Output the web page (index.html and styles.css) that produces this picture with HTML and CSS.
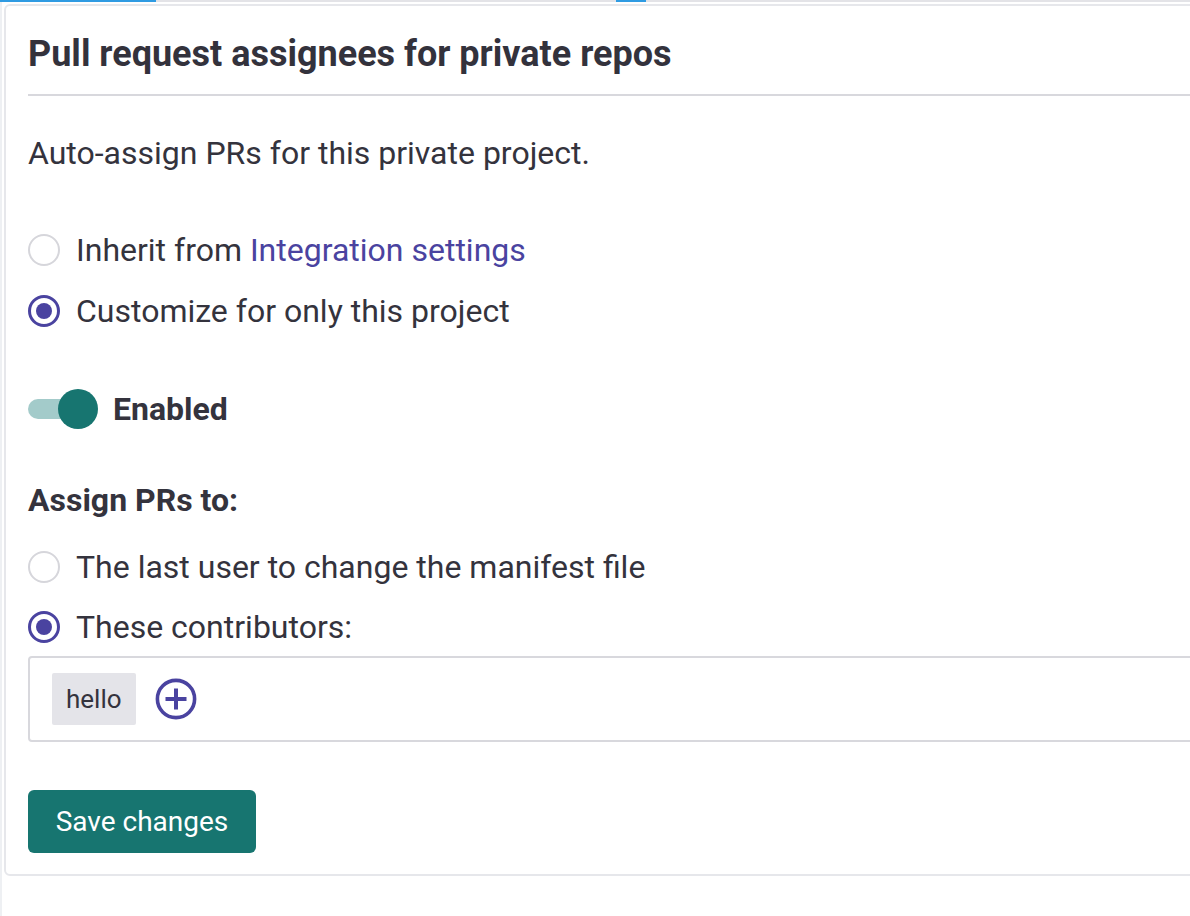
FILE: index.html
```html
<!DOCTYPE html>
<html lang="en">
<head>
<meta charset="utf-8">
<title>Pull request assignees</title>
<link rel="stylesheet" href="styles.css">
</head>
<body>
<div class="page">
  <div class="tabbar">
    <span class="tab-ind tab-ind-a"></span>
    <span class="tab-gap tab-gap-a"></span>
    <span class="tab-ind tab-ind-b"></span>
  </div>
  <div class="frame">
    <section class="card">
      <h2 class="card-title">Pull request assignees for private repos</h2>
      <p class="desc">Auto-assign PRs for this private project.</p>

      <div class="radio-group group-top">
        <label class="radio-row">
          <span class="radio"></span>
          <span class="radio-label">Inherit from <a class="link" href="#">Integration settings</a></span>
        </label>
        <label class="radio-row">
          <span class="radio radio-on"></span>
          <span class="radio-label">Customize for only this project</span>
        </label>
      </div>

      <div class="toggle-row">
        <span class="toggle"><span class="toggle-knob"></span></span>
        <span class="toggle-label">Enabled</span>
      </div>

      <h3 class="sub-title">Assign PRs to:</h3>

      <div class="radio-group group-assign">
        <label class="radio-row">
          <span class="radio"></span>
          <span class="radio-label">The last user to change the manifest file</span>
        </label>
        <label class="radio-row">
          <span class="radio radio-on"></span>
          <span class="radio-label">These contributors:</span>
        </label>
      </div>

      <div class="contrib-box">
        <span class="tag">hello</span>
        <span class="add-btn">
          <svg width="42" height="42" viewBox="0 0 42 42" aria-hidden="true">
            <circle cx="21" cy="21" r="18.6" fill="none" stroke="#4a43a0" stroke-width="3.6"/>
            <path d="M21 10.5 V31.5 M10.5 21 H31.5" stroke="#4a43a0" stroke-width="4" fill="none"/>
          </svg>
        </span>
      </div>

      <button class="save-btn" type="button">Save changes</button>
    </section>
  </div>
</div>
</body>
</html>
```

FILE: styles.css
```css
* { box-sizing: border-box; }

html, body {
  margin: 0;
  padding: 0;
  background: #ffffff;
  overflow: hidden;
}

body {
  font-family: Roboto, "Liberation Sans", Arial, sans-serif;
  color: #34333d;
  width: 1190px;
  height: 916px;
}

.page {
  height: 916px;
  border-left: 2px solid #eef0f3;
}

.tabbar {
  display: flex;
  height: 2px;
  background: #e3e3e7;
  margin-left: -2px;
}

.tab-ind {
  display: block;
  height: 2px;
  background: #2f9be2;
}

.tab-ind-a { width: 156px; }
.tab-gap-a { width: 460px; }
.tab-ind-b { width: 30px; }

.frame {
  padding: 2px 0 0 2px;
}

.card {
  width: 1240px;
  border: 2px solid #e6e7eb;
  border-radius: 6px;
  padding: 0 0 21px 22px;
}

.card-title {
  margin: 0;
  padding: 28px 0 20px;
  font-size: 36px;
  line-height: 40px;
  font-weight: 700;
  color: #33323c;
  border-bottom: 2px solid #d8d8dd;
}

.desc {
  margin: 37px 0 0;
  font-size: 32px;
  line-height: 40px;
}

.radio-group {
  display: flex;
  flex-direction: column;
}

.group-top {
  margin-top: 57px;
  gap: 21px;
}

.group-assign {
  margin-top: 27px;
  gap: 20px;
}

.radio-row {
  display: flex;
  align-items: center;
  height: 40px;
  gap: 16px;
  font-size: 32px;
  line-height: 40px;
  cursor: pointer;
}

.radio {
  flex: none;
  width: 32px;
  height: 32px;
  border-radius: 50%;
  border: 2px solid #d6d6db;
  background: #fff;
  display: flex;
  align-items: center;
  justify-content: center;
}

.radio-on {
  border: 3px solid #4a43a0;
}

.radio-on::after {
  content: "";
  width: 16px;
  height: 16px;
  border-radius: 50%;
  background: #4a43a0;
}

.link {
  color: #4a43a0;
  text-decoration: none;
}

.toggle-row {
  display: flex;
  align-items: center;
  gap: 15px;
  margin-top: 58px;
  height: 40px;
}

.toggle {
  position: relative;
  flex: none;
  width: 70px;
  height: 40px;
  display: flex;
  align-items: center;
}

.toggle::before {
  content: "";
  display: block;
  width: 64px;
  height: 20px;
  border-radius: 10px;
  background: #a3cbca;
}

.toggle-knob {
  position: absolute;
  top: 0;
  left: 30px;
  width: 40px;
  height: 40px;
  border-radius: 50%;
  background: #177570;
}

.toggle-label {
  font-size: 32px;
  font-weight: 700;
  line-height: 40px;
}

.sub-title {
  margin: 51px 0 0;
  font-size: 32px;
  line-height: 40px;
  font-weight: 700;
}

.contrib-box {
  margin-top: 9px;
  height: 86px;
  border: 2px solid #d8d8dd;
  border-radius: 4px;
  display: flex;
  align-items: center;
  padding: 0 22px;
  gap: 19px;
}

.tag {
  display: flex;
  align-items: center;
  height: 52px;
  padding: 0 14px;
  background: #e4e4e9;
  border-radius: 2px;
  font-size: 26px;
}

.add-btn {
  display: flex;
  width: 42px;
  height: 42px;
}

.save-btn {
  display: block;
  margin-top: 48px;
  height: 63px;
  width: 228px;
  border: none;
  border-radius: 6px;
  background: #177570;
  color: #ffffff;
  font-family: Roboto, "Liberation Sans", Arial, sans-serif;
  font-size: 28px;
  padding: 0;
}
```
